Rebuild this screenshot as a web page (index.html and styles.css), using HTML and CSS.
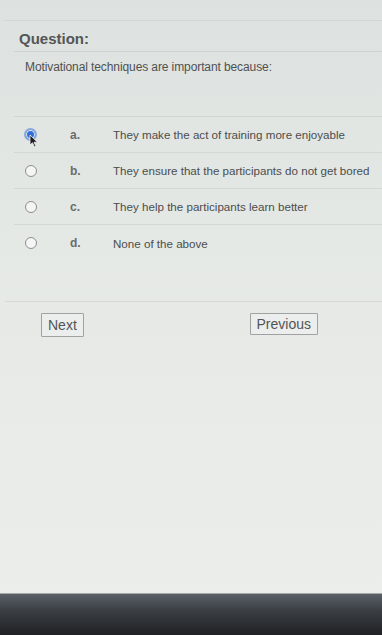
FILE: index.html
```html
<!DOCTYPE html>
<html lang="en">
<head>
    <meta charset="UTF-8">
    <meta name="viewport" content="width=device-width, initial-scale=1.0">
    <title>Question</title>
    <link rel="stylesheet" href="styles.css">
</head>
<body>
    <div class="screen">
        <div class="quiz">
            <h2 class="quiz-title">Question:</h2>
            <p class="quiz-text">Motivational techniques are important because:</p>

            <div class="options">
                <label class="option">
                    <span class="radio checked">
                        <svg class="cursor" width="10" height="14" viewBox="0 0 10 14">
                            <path d="M1 1 L1 11 L3.5 8.8 L5.5 13 L7 12.3 L5 8.2 L8.5 8.2 Z" fill="#1e1f22" stroke="#f2f2f2" stroke-width="0.8"/>
                        </svg>
                    </span>
                    <span class="letter">a.</span>
                    <span class="answer">They make the act of training more enjoyable</span>
                </label>
                <label class="option">
                    <span class="radio"></span>
                    <span class="letter">b.</span>
                    <span class="answer">They ensure that the participants do not get bored</span>
                </label>
                <label class="option">
                    <span class="radio"></span>
                    <span class="letter">c.</span>
                    <span class="answer">They help the participants learn better</span>
                </label>
                <label class="option">
                    <span class="radio"></span>
                    <span class="letter">d.</span>
                    <span class="answer">None of the above</span>
                </label>
            </div>

            <div class="nav">
                <button class="nav-btn next">Next</button>
                <button class="nav-btn prev">Previous</button>
            </div>
        </div>
        <div class="bezel"></div>
    </div>
</body>
</html>
```

FILE: styles.css
```css
/* Reset */
* {
    margin: 0;
    padding: 0;
    box-sizing: border-box;
}

body {
    font-family: 'Liberation Sans', Arial, sans-serif;
    color: #4d4f4f;
    background: #e8ebe9;
}

.screen {
    height: 635px;
    display: flex;
    flex-direction: column;
    background: linear-gradient(180deg, #dde1df 0%, #e5e9e6 40%, #eceeec 100%);
}

.quiz {
    flex: 1;
    padding-top: 20px;
}

/* Header */
.quiz-title {
    border-top: 1px solid #d3d6d4;
    margin-left: 3px;
    padding: 9px 0 4px 16px;
    font-size: 15px;
    font-weight: bold;
    color: #545656;
}

.quiz-text {
    border-top: 1px solid #cfd2d0;
    margin-left: 14px;
    padding: 8px 0 0 11px;
    height: 65px;
    font-size: 12px;
    letter-spacing: -0.1px;
    color: #4f5151;
}

/* Options */
.options {
    border-top: 1px solid #d1d4d2;
    margin-left: 14px;
    height: 185px;
}

.option {
    display: flex;
    align-items: center;
    height: 36px;
    border-bottom: 1px solid #d4d7d5;
    font-size: 12px;
}

.option:last-child {
    border-bottom: none;
}

.radio {
    width: 12px;
    height: 12px;
    margin-left: 11px;
    border: 1px solid #8c8f8e;
    border-radius: 50%;
    background: #f4f5f4;
    position: relative;
}

.radio.checked {
    width: 13px;
    height: 13px;
    margin-left: 10px;
    border: 2px solid #8aa9d8;
    background: #2f6fd6;
    box-shadow: inset 0 0 0 1px #e8eef8;
}

.cursor {
    position: absolute;
    left: 3px;
    top: 4px;
}

.letter {
    width: 43px;
    margin-left: 33px;
    font-size: 12px;
    font-weight: bold;
    color: #6a6c6c;
}

.answer {
    font-size: 11.6px;
    color: #4b4d4d;
    white-space: nowrap;
}

/* Navigation */
.nav {
    border-top: 1px solid #d6d9d7;
    margin-left: 5px;
    display: flex;
    justify-content: space-between;
    align-items: flex-start;
    padding: 11px 64px 0 36px;
}

.nav-btn {
    font-family: 'Liberation Sans', Arial, sans-serif;
    font-size: 14px;
    color: #535555;
    background: #eceeed;
    border: 1px solid #9fa2a1;
    border-radius: 1px;
    padding: 3px 6px;
}

.nav-btn.prev {
    padding: 2px 6px;
}

/* Monitor bezel */
.bezel {
    height: 42px;
    border-top: 1px solid #a5a9ac;
    background: linear-gradient(180deg, #5a6066 0%, #3b3f44 40%, #1f2124 100%);
}
```
